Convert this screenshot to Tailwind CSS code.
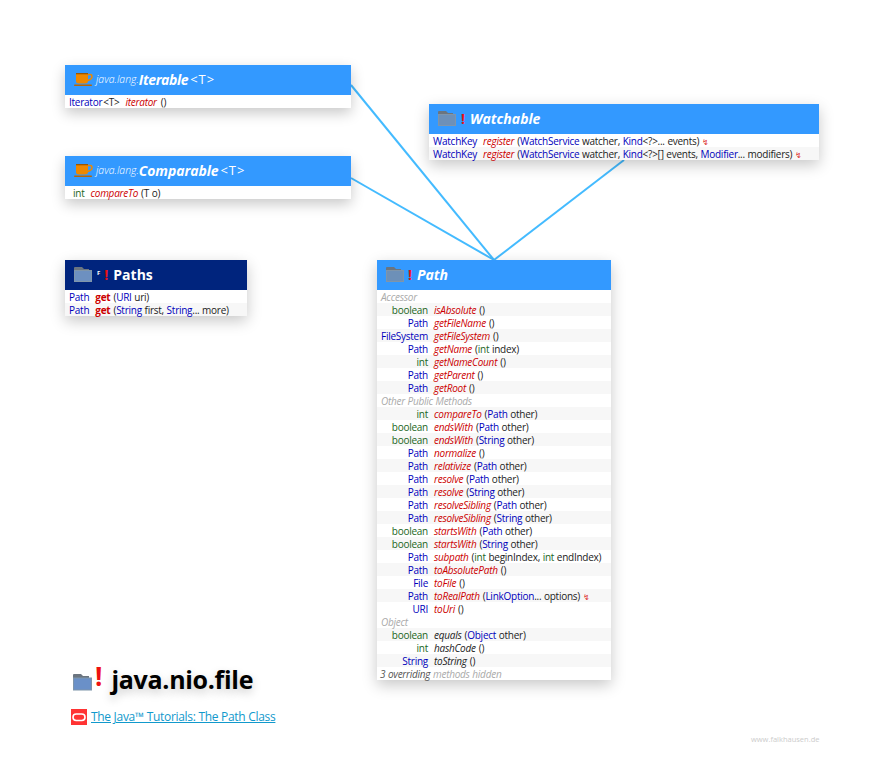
<!DOCTYPE html>
<html>
<head>
<meta charset="utf-8">
<script src="https://cdn.jsdelivr.net/npm/@tailwindcss/browser@4"></script>
</head>
<body class="bg-white">
<main class="relative w-[875px] h-[784px] overflow-hidden bg-white text-[10px] leading-[15px] tracking-[-0.25px] [word-spacing:0.3px] text-[#222] font-['Open_Sans','Noto_Sans',sans-serif]">
<svg class="absolute left-0 top-0" width="875" height="784"><g stroke="#44bbff" stroke-width="2" fill="none"><path d="M351 85 L494 260"/><path d="M351 178 L494 260"/><path d="M624 160 L494 260"/></g></svg>

<!-- Iterable -->
<section class="absolute left-[65px] top-[65px] w-[286px] bg-white shadow-[0_5px_14px_rgba(0,0,0,0.22)]">
 <header class="h-[30px] bg-[#3399ff] flex items-center pl-[9px] pb-[1px] tracking-normal text-white whitespace-nowrap">
  <svg class="mt-[1px]" width="19" height="16" viewBox="0 0 19 16"><path d="M2 1h12v8q0 2.500-3 2.500H5Q2 11.500 2 9z" fill="#ee8800"/><path d="M14 2.500h2q2 0 2 2.200T15 8l-1 .5" stroke="#ee8800" stroke-width="1.500" fill="none"/><rect x="0" y="12.500" width="18" height="1.500" rx=".7" fill="#bb6600"/><path d="M2 1h12v1.300H2z" fill="#995500"/></svg>
  <span class="ml-[3px] italic text-[10.500px] font-light">java.lang.</span><b class="italic text-[14px] tracking-[-0.4px]">Iterable</b><span class="ml-[2px] text-[13px] tracking-[1px]">&lt;T&gt;</span>
 </header>
 <div class="flex h-[13px] items-start whitespace-nowrap pl-[4px]"><span class="text-[#0000bb]">Iterator</span><span class="ml-[1px]">&lt;T&gt;</span><i class="ml-[6px] text-[#cc0000]">iterator</i><span class="ml-[4px]">()</span></div>
</section>

<!-- Comparable -->
<section class="absolute left-[65px] top-[156px] w-[286px] bg-white shadow-[0_5px_14px_rgba(0,0,0,0.22)]">
 <header class="h-[30px] bg-[#3399ff] flex items-center pl-[9px] pb-[1px] tracking-normal text-white whitespace-nowrap">
  <svg class="mt-[1px]" width="19" height="16" viewBox="0 0 19 16"><path d="M2 1h12v8q0 2.500-3 2.500H5Q2 11.500 2 9z" fill="#ee8800"/><path d="M14 2.500h2q2 0 2 2.200T15 8l-1 .5" stroke="#ee8800" stroke-width="1.500" fill="none"/><rect x="0" y="12.500" width="18" height="1.500" rx=".7" fill="#bb6600"/><path d="M2 1h12v1.300H2z" fill="#995500"/></svg>
  <span class="ml-[3px] italic text-[10.500px] font-light">java.lang.</span><b class="italic text-[14px] tracking-[-0.1px]">Comparable</b><span class="ml-[2px] text-[13px] tracking-[1px]">&lt;T&gt;</span>
 </header>
 <div class="flex h-[13px] items-start whitespace-nowrap pl-[8px]"><span class="text-[#226622]">int</span><i class="ml-[6px] text-[#cc0000]">compareTo</i><span class="ml-[3px]">(T o)</span></div>
</section>

<!-- Watchable -->
<section class="absolute left-[429px] top-[104px] w-[390px] bg-white shadow-[0_5px_14px_rgba(0,0,0,0.22)]">
 <header class="h-[30px] bg-[#3399ff] flex items-center pl-[9px] pb-[2px] tracking-normal text-white whitespace-nowrap">
  <svg width="18" height="16" viewBox="0 0 18 16"><path d="M0 2q0-1 1-1h7l2 2h5v3H0z" fill="#6b7580"/><rect x=".5" y="4.500" width="17" height="11" fill="#6d90b8" stroke="#7f95aa"/></svg>
  <b class="ml-[5px] text-[14px] text-[#ee1111]">!</b><b class="ml-[5px] italic text-[14px]">Watchable</b>
 </header>
 <div class="flex h-[13px] items-start whitespace-nowrap pl-[4px]"><span class="text-[#0000bb]">WatchKey</span><i class="ml-[6px] text-[#cc0000]">register</i><span class="ml-[3px]">(<span class="text-[#0000bb]">WatchService</span> watcher, <span class="text-[#0000bb]">Kind</span>&lt;?&gt;... events)</span><span class="ml-[3px] text-[8px] text-[#dd3333]">↯</span></div>
 <div class="flex h-[13px] items-start whitespace-nowrap pl-[4px] bg-[#f7f7f7]"><span class="text-[#0000bb]">WatchKey</span><i class="ml-[6px] text-[#cc0000]">register</i><span class="ml-[3px]">(<span class="text-[#0000bb]">WatchService</span> watcher, <span class="text-[#0000bb]">Kind</span>&lt;?&gt;[] events, <span class="text-[#0000bb]">Modifier</span>... modifiers)</span><span class="ml-[3px] text-[8px] text-[#dd3333]">↯</span></div>
</section>

<!-- Paths -->
<section class="absolute left-[65px] top-[260px] w-[182px] bg-white shadow-[0_5px_14px_rgba(0,0,0,0.22)]">
 <header class="h-[30px] bg-[#00247d] flex items-center pl-[9px] pb-[2px] tracking-normal text-white whitespace-nowrap">
  <svg width="18" height="16" viewBox="0 0 18 16"><path d="M0 2q0-1 1-1h7l2 2h5v3H0z" fill="#6b7580"/><rect x=".5" y="4.500" width="17" height="11" fill="#6d90c0" stroke="#7f95aa"/></svg>
  <span class="ml-[5px] text-[6px] self-start mt-[6px] font-bold">F</span><b class="ml-[4px] text-[14px] text-[#ee1111]">!</b><b class="ml-[5px] text-[14px]">Paths</b>
 </header>
 <div class="flex h-[13px] items-start whitespace-nowrap pl-[4px]"><span class="text-[#0000bb]">Path</span><b class="ml-[6px] text-[#cc0000]">get</b><span class="ml-[3px]">(<span class="text-[#0000bb]">URI</span> uri)</span></div>
 <div class="flex h-[13px] items-start whitespace-nowrap pl-[4px] bg-[#f7f7f7]"><span class="text-[#0000bb]">Path</span><b class="ml-[6px] text-[#cc0000]">get</b><span class="ml-[3px]">(<span class="text-[#0000bb]">String</span> first, <span class="text-[#0000bb]">String</span>... more)</span></div>
</section>

<!-- Path -->
<section class="absolute left-[377px] top-[260px] w-[234px] bg-white shadow-[0_5px_14px_rgba(0,0,0,0.22)]">
 <header class="h-[30px] bg-[#3399ff] flex items-center pl-[9px] pb-[2px] tracking-normal text-white whitespace-nowrap">
  <svg width="18" height="16" viewBox="0 0 18 16"><path d="M0 2q0-1 1-1h7l2 2h5v3H0z" fill="#6b7580"/><rect x=".5" y="4.500" width="17" height="11" fill="#6d90b8" stroke="#7f95aa"/></svg>
  <b class="ml-[4px] text-[14px] text-[#ee1111]">!</b><b class="ml-[5px] italic text-[14px]">Path</b>
 </header>
 <div class="flex h-[13px] items-start pl-[4px] italic text-[#aaaaaa]">Accessor</div>
 <div class="flex h-[13px] items-start whitespace-nowrap bg-[#f7f7f7]"><span class="w-[51px] text-right text-[#226622]">boolean</span><i class="ml-[6px] text-[#cc0000]">isAbsolute</i><span class="ml-[3px]">()</span></div>
 <div class="flex h-[13px] items-start whitespace-nowrap"><span class="w-[51px] text-right text-[#0000bb]">Path</span><i class="ml-[6px] text-[#cc0000]">getFileName</i><span class="ml-[3px]">()</span></div>
 <div class="flex h-[13px] items-start whitespace-nowrap bg-[#f7f7f7]"><span class="w-[51px] text-right text-[#0000bb]">FileSystem</span><i class="ml-[6px] text-[#cc0000]">getFileSystem</i><span class="ml-[3px]">()</span></div>
 <div class="flex h-[13px] items-start whitespace-nowrap"><span class="w-[51px] text-right text-[#0000bb]">Path</span><i class="ml-[6px] text-[#cc0000]">getName</i><span class="ml-[3px]">(<span class="text-[#226622]">int</span> index)</span></div>
 <div class="flex h-[13px] items-start whitespace-nowrap bg-[#f7f7f7]"><span class="w-[51px] text-right text-[#226622]">int</span><i class="ml-[6px] text-[#cc0000]">getNameCount</i><span class="ml-[3px]">()</span></div>
 <div class="flex h-[13px] items-start whitespace-nowrap"><span class="w-[51px] text-right text-[#0000bb]">Path</span><i class="ml-[6px] text-[#cc0000]">getParent</i><span class="ml-[3px]">()</span></div>
 <div class="flex h-[13px] items-start whitespace-nowrap bg-[#f7f7f7]"><span class="w-[51px] text-right text-[#0000bb]">Path</span><i class="ml-[6px] text-[#cc0000]">getRoot</i><span class="ml-[3px]">()</span></div>
 <div class="flex h-[13px] items-start pl-[4px] italic text-[#aaaaaa]">Other Public Methods</div>
 <div class="flex h-[13px] items-start whitespace-nowrap bg-[#f7f7f7]"><span class="w-[51px] text-right text-[#226622]">int</span><i class="ml-[6px] text-[#cc0000]">compareTo</i><span class="ml-[3px]">(<span class="text-[#0000bb]">Path</span> other)</span></div>
 <div class="flex h-[13px] items-start whitespace-nowrap"><span class="w-[51px] text-right text-[#226622]">boolean</span><i class="ml-[6px] text-[#cc0000]">endsWith</i><span class="ml-[3px]">(<span class="text-[#0000bb]">Path</span> other)</span></div>
 <div class="flex h-[13px] items-start whitespace-nowrap bg-[#f7f7f7]"><span class="w-[51px] text-right text-[#226622]">boolean</span><i class="ml-[6px] text-[#cc0000]">endsWith</i><span class="ml-[3px]">(<span class="text-[#0000bb]">String</span> other)</span></div>
 <div class="flex h-[13px] items-start whitespace-nowrap"><span class="w-[51px] text-right text-[#0000bb]">Path</span><i class="ml-[6px] text-[#cc0000]">normalize</i><span class="ml-[3px]">()</span></div>
 <div class="flex h-[13px] items-start whitespace-nowrap bg-[#f7f7f7]"><span class="w-[51px] text-right text-[#0000bb]">Path</span><i class="ml-[6px] text-[#cc0000]">relativize</i><span class="ml-[3px]">(<span class="text-[#0000bb]">Path</span> other)</span></div>
 <div class="flex h-[13px] items-start whitespace-nowrap"><span class="w-[51px] text-right text-[#0000bb]">Path</span><i class="ml-[6px] text-[#cc0000]">resolve</i><span class="ml-[3px]">(<span class="text-[#0000bb]">Path</span> other)</span></div>
 <div class="flex h-[13px] items-start whitespace-nowrap bg-[#f7f7f7]"><span class="w-[51px] text-right text-[#0000bb]">Path</span><i class="ml-[6px] text-[#cc0000]">resolve</i><span class="ml-[3px]">(<span class="text-[#0000bb]">String</span> other)</span></div>
 <div class="flex h-[13px] items-start whitespace-nowrap"><span class="w-[51px] text-right text-[#0000bb]">Path</span><i class="ml-[6px] text-[#cc0000]">resolveSibling</i><span class="ml-[3px]">(<span class="text-[#0000bb]">Path</span> other)</span></div>
 <div class="flex h-[13px] items-start whitespace-nowrap bg-[#f7f7f7]"><span class="w-[51px] text-right text-[#0000bb]">Path</span><i class="ml-[6px] text-[#cc0000]">resolveSibling</i><span class="ml-[3px]">(<span class="text-[#0000bb]">String</span> other)</span></div>
 <div class="flex h-[13px] items-start whitespace-nowrap"><span class="w-[51px] text-right text-[#226622]">boolean</span><i class="ml-[6px] text-[#cc0000]">startsWith</i><span class="ml-[3px]">(<span class="text-[#0000bb]">Path</span> other)</span></div>
 <div class="flex h-[13px] items-start whitespace-nowrap bg-[#f7f7f7]"><span class="w-[51px] text-right text-[#226622]">boolean</span><i class="ml-[6px] text-[#cc0000]">startsWith</i><span class="ml-[3px]">(<span class="text-[#0000bb]">String</span> other)</span></div>
 <div class="flex h-[13px] items-start whitespace-nowrap"><span class="w-[51px] text-right text-[#0000bb]">Path</span><i class="ml-[6px] text-[#cc0000]">subpath</i><span class="ml-[3px]">(<span class="text-[#226622]">int</span> beginIndex, <span class="text-[#226622]">int</span> endIndex)</span></div>
 <div class="flex h-[13px] items-start whitespace-nowrap bg-[#f7f7f7]"><span class="w-[51px] text-right text-[#0000bb]">Path</span><i class="ml-[6px] text-[#cc0000]">toAbsolutePath</i><span class="ml-[3px]">()</span></div>
 <div class="flex h-[13px] items-start whitespace-nowrap"><span class="w-[51px] text-right text-[#0000bb]">File</span><i class="ml-[6px] text-[#cc0000]">toFile</i><span class="ml-[3px]">()</span></div>
 <div class="flex h-[13px] items-start whitespace-nowrap bg-[#f7f7f7]"><span class="w-[51px] text-right text-[#0000bb]">Path</span><i class="ml-[6px] text-[#cc0000]">toRealPath</i><span class="ml-[3px]">(<span class="text-[#0000bb]">LinkOption</span>... options)</span><span class="ml-[3px] text-[8px] text-[#dd3333]">↯</span></div>
 <div class="flex h-[13px] items-start whitespace-nowrap"><span class="w-[51px] text-right text-[#0000bb]">URI</span><i class="ml-[6px] text-[#cc0000]">toUri</i><span class="ml-[3px]">()</span></div>
 <div class="flex h-[13px] items-start pl-[4px] italic text-[#aaaaaa]">Object</div>
 <div class="flex h-[13px] items-start whitespace-nowrap bg-[#f7f7f7]"><span class="w-[51px] text-right text-[#226622]">boolean</span><i class="ml-[6px]">equals</i><span class="ml-[3px]">(<span class="text-[#0000bb]">Object</span> other)</span></div>
 <div class="flex h-[13px] items-start whitespace-nowrap"><span class="w-[51px] text-right text-[#226622]">int</span><i class="ml-[6px]">hashCode</i><span class="ml-[3px]">()</span></div>
 <div class="flex h-[13px] items-start whitespace-nowrap bg-[#f7f7f7]"><span class="w-[51px] text-right text-[#0000bb]">String</span><i class="ml-[6px]">toString</i><span class="ml-[3px]">()</span></div>
 <div class="flex h-[13px] items-start pl-[3px] italic text-[#aaaaaa] whitespace-nowrap"><span class="text-[#555]">3 overriding</span>&nbsp;methods hidden</div>
</section>

<!-- Title -->
<div class="absolute left-[73px] top-[661px] flex items-center whitespace-nowrap tracking-normal">
 <svg width="20" height="19" viewBox="0 0 20 19" class="mt-[6px]"><path d="M0 2q0-1 1-1h7l2 2h6v4H0z" fill="#6b7580"/><rect x=".5" y="5" width="18" height="12" fill="#6a90c8" stroke="#7f95aa"/></svg>
 <span class="ml-[2px] mb-[6px] text-[26px] leading-[30px] font-bold text-[#ee1111]">!</span>
 <h1 class="ml-[9px] text-[25px] leading-[30px] tracking-[-0.3px] font-bold text-black [text-shadow:0_4px_10px_rgba(0,0,0,0.22)]">java.nio.file</h1>
</div>
<!-- Link -->
<div class="absolute left-[71px] top-[709px] flex items-center whitespace-nowrap tracking-[-0.3px] [word-spacing:0]">
 <svg width="16" height="16" viewBox="0 0 16 16"><rect width="16" height="16" fill="#ff3333"/><rect x="2" y="5" width="12" height="6.500" rx="3.200" fill="none" stroke="#fff" stroke-width="1.600"/></svg>
 <a href="#" class="ml-[4px] text-[12px] leading-[16px] text-[#1199cc] underline">The Java™ Tutorials: The Path Class</a>
</div>
<div class="absolute left-[751px] top-[732px] text-[7.500px] tracking-normal text-[#cccccc] whitespace-nowrap">www.falkhausen.de</div>
</main>
</body>
</html>
